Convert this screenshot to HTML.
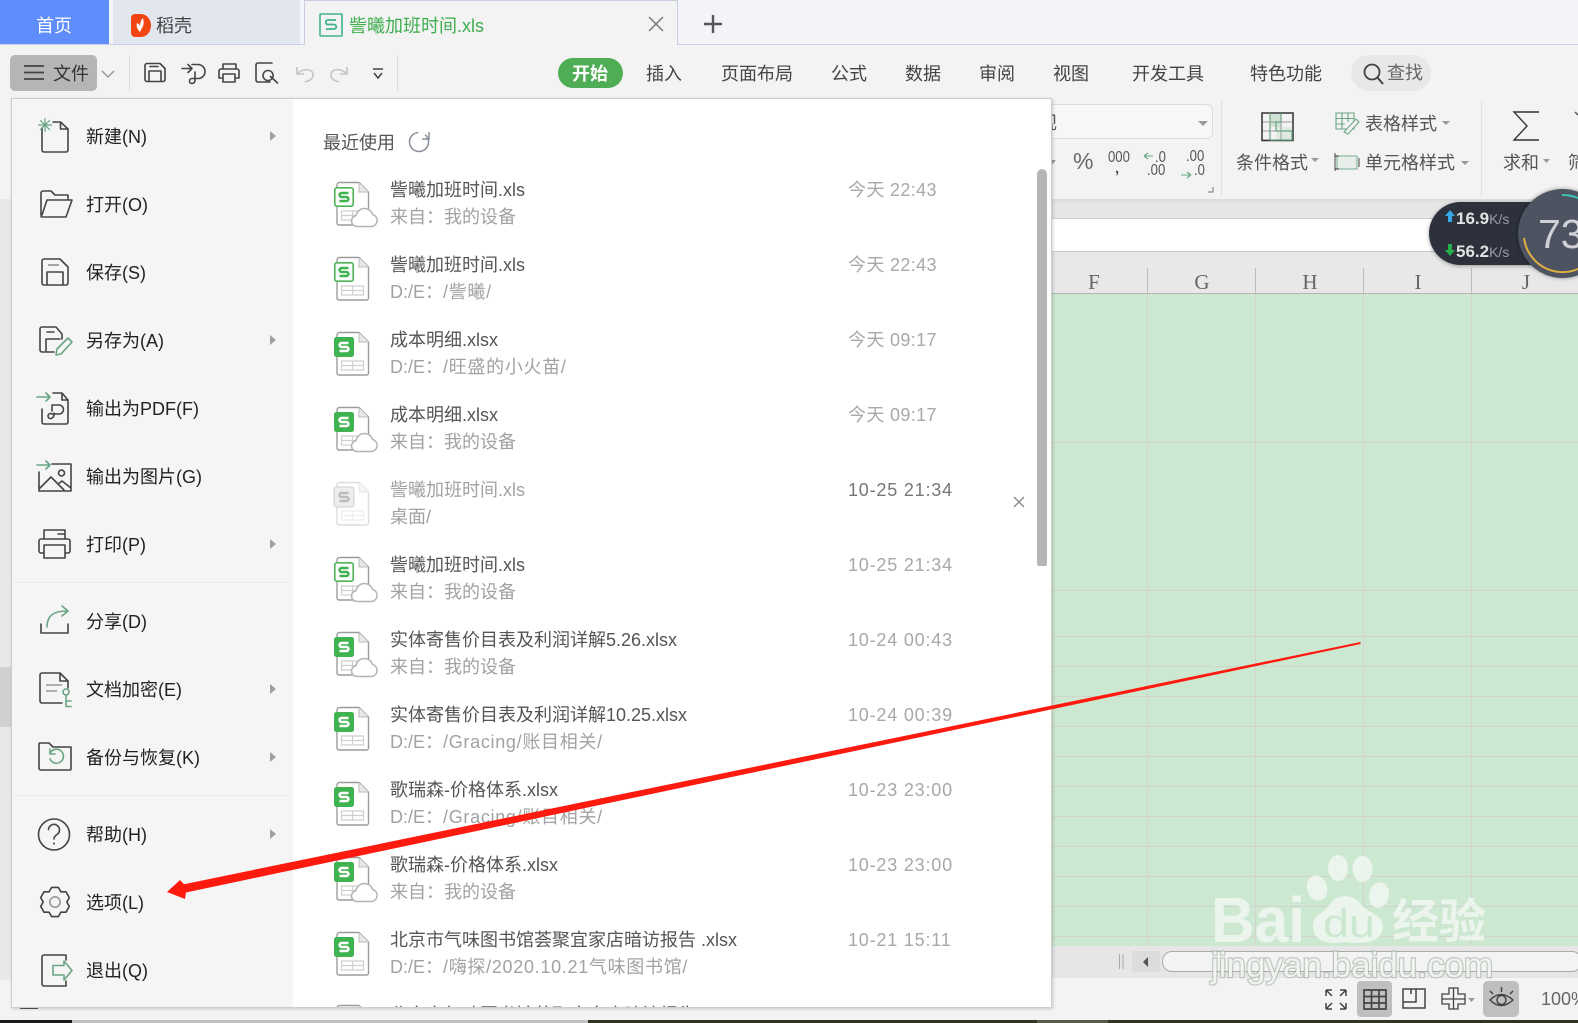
<!DOCTYPE html>
<html lang="zh"><head><meta charset="utf-8"><title>WPS</title>
<style>
html,body{margin:0;padding:0;background:#f3f3f3}
body{width:1578px;height:1023px;position:relative;overflow:hidden;font-family:"Liberation Sans","Noto Sans CJK SC",sans-serif;font-size:18px;color:#333}
.a{position:absolute}
.t{position:absolute;white-space:nowrap;line-height:18px;height:18px}
.m{color:#222;left:86px}
.n{color:#555;left:390px}
.s{color:#a2a2a2;left:390px}
.s span{letter-spacing:.7px}
.d{color:#a8a8a8;left:848px;letter-spacing:.8px}
.d.j{letter-spacing:.35px}
.g{position:absolute;background:#d2d2cf}
.tab{color:#444;transform:translateX(-50%)}
.ar{position:absolute;left:270px;width:0;height:0;border-left:6px solid #a0a0a0;border-top:5px solid transparent;border-bottom:5px solid transparent}
svg{position:absolute;left:0;top:0;overflow:visible}
.c{fill:none;stroke:#444;stroke-width:1.6;stroke-linejoin:round;stroke-linecap:round}
.gr{fill:none;stroke:#69a583;stroke-width:1.6;stroke-linejoin:round;stroke-linecap:round}
.col{font-family:"Liberation Serif",serif;font-size:21px;color:#666;line-height:21px;height:21px;transform:translateX(-50%)}
.num{font-size:16px;line-height:16px;height:16px;color:#555;transform:scaleX(.82);transform-origin:left top}
</style></head><body>
<!-- tab bar -->
<div class="a" style="left:0;top:0;width:1578px;height:44px;background:#f2f4f9;border-bottom:1px solid #c9cfe0"></div>
<div class="a" style="left:0;top:0;width:109px;height:44px;background:#5f8dfc"></div>
<div class="a" style="left:113px;top:0;width:187px;height:44px;background:#e2e6ef"></div>
<div class="a" style="left:304px;top:0;width:374px;height:45px;background:#f3f3f3;border:1px solid #c9cfe0;border-bottom:0;box-sizing:border-box"></div>
<div class="t" style="left:36px;top:17px;color:#fff">首页</div>
<div class="t" style="left:156px;top:17px;color:#444">稻壳</div>
<div class="t" style="left:349px;top:17px;color:#3fae4f">訾曦加班时间.xls</div>
<!-- toolbar bg -->
<div class="a" style="left:0;top:45px;width:1578px;height:154px;background:#f3f3f3"></div>
<div class="a" style="left:0;top:199px;width:1578px;height:19px;background:linear-gradient(#dcdcdc,#e6e6e6 5px)"></div>
<div class="a" style="left:0;top:218px;width:1578px;height:34px;background:#fff;border-top:1px solid #d0d0d0;border-bottom:1px solid #c8c8c8;box-sizing:border-box"></div>
<div class="a" style="left:0;top:252px;width:1578px;height:42px;background:#e8e8e8;border-bottom:1px solid #b4b4b4;box-sizing:border-box"></div>
<div class="a" style="left:10px;top:55px;width:87px;height:36px;background:#b5b5b5;border-radius:5px"></div>
<div class="t" style="left:53px;top:65px;color:#333">文件</div>
<div class="a" style="left:129px;top:55px;width:1px;height:36px;background:#dcdcdc"></div>
<div class="a" style="left:397px;top:55px;width:1px;height:36px;background:#dcdcdc"></div>
<div class="a" style="left:558px;top:58px;width:65px;height:30px;background:#4fae55;border-radius:15px"></div>
<div class="t" style="left:572px;top:65px;color:#fff;font-weight:700">开始</div>
<div class="t tab" style="left:664px;top:65px">插入</div>
<div class="t tab" style="left:757px;top:65px">页面布局</div>
<div class="t tab" style="left:849px;top:65px">公式</div>
<div class="t tab" style="left:923px;top:65px">数据</div>
<div class="t tab" style="left:997px;top:65px">审阅</div>
<div class="t tab" style="left:1071px;top:65px">视图</div>
<div class="t tab" style="left:1168px;top:65px">开发工具</div>
<div class="t tab" style="left:1286px;top:65px">特色功能</div>
<div class="a" style="left:1351px;top:55px;width:80px;height:36px;background:#e7e8e9;border-radius:18px"></div>
<div class="t" style="left:1387px;top:64px;color:#666">查找</div>
<!-- ribbon right -->
<div class="a" style="left:1040px;top:104px;width:173px;height:35px;background:#f7f7f7;border:1px solid #dcdcdc;border-radius:6px;box-sizing:border-box"></div>
<div class="t" style="left:1039px;top:114px;color:#555">规</div>
<div class="a" style="left:1221px;top:101px;width:1px;height:95px;background:#e0e0e0"></div>
<div class="a" style="left:1481px;top:101px;width:1px;height:95px;background:#e0e0e0"></div>
<div class="t" style="left:1236px;top:154px;color:#555">条件格式</div>
<div class="t" style="left:1365px;top:115px;color:#555">表格样式</div>
<div class="t" style="left:1365px;top:154px;color:#555">单元格样式</div>
<div class="t" style="left:1503px;top:154px;color:#555">求和</div>
<div class="t" style="left:1568px;top:154px;color:#555">筛</div>
<div class="t" style="left:1073px;top:150px;font-size:23px;line-height:23px;color:#6a6a6a">%</div>
<div class="t num" style="left:1108px;top:150px">000</div>
<div class="t" style="left:1115px;top:161px;font-size:15px;line-height:15px;color:#555;font-weight:700">,</div>
<div class="t num" style="left:1155px;top:150px">.0</div>
<div class="t num" style="left:1147px;top:163px">.00</div>
<div class="t num" style="left:1186px;top:149px">.00</div>
<div class="t num" style="left:1194px;top:163px">.0</div>
<!-- column headers -->
<div class="t col" style="left:1094px;top:272px">F</div>
<div class="t col" style="left:1202px;top:272px">G</div>
<div class="t col" style="left:1310px;top:272px">H</div>
<div class="t col" style="left:1418px;top:272px">I</div>
<div class="t col" style="left:1526px;top:272px">J</div>
<div class="a" style="left:1147px;top:268px;width:1px;height:26px;background:#bcbcbc"></div>
<div class="a" style="left:1255px;top:268px;width:1px;height:26px;background:#bcbcbc"></div>
<div class="a" style="left:1363px;top:268px;width:1px;height:26px;background:#bcbcbc"></div>
<div class="a" style="left:1471px;top:268px;width:1px;height:26px;background:#bcbcbc"></div>
<!-- grid -->
<div class="a" style="left:1040px;top:294px;width:538px;height:652px;background:#cde8d0"></div>
<div class="g" style="left:1147px;top:294px;width:1px;height:652px"></div>
<div class="g" style="left:1255px;top:294px;width:1px;height:652px"></div>
<div class="g" style="left:1363px;top:294px;width:1px;height:652px"></div>
<div class="g" style="left:1471px;top:294px;width:1px;height:652px"></div>
<div class="g" style="left:1040px;top:442px;width:538px;height:1px"></div>
<div class="g" style="left:1040px;top:590px;width:538px;height:1px"></div>
<div class="g" style="left:1040px;top:636px;width:538px;height:1px"></div>
<div class="g" style="left:1040px;top:666px;width:538px;height:1px"></div>
<div class="g" style="left:1040px;top:696px;width:538px;height:1px"></div>
<div class="g" style="left:1040px;top:726px;width:538px;height:1px"></div>
<div class="g" style="left:1040px;top:756px;width:538px;height:1px"></div>
<div class="g" style="left:1040px;top:786px;width:538px;height:1px"></div>
<div class="g" style="left:1040px;top:816px;width:538px;height:1px"></div>
<div class="g" style="left:1040px;top:846px;width:538px;height:1px"></div>
<div class="g" style="left:1040px;top:876px;width:538px;height:1px"></div>
<div class="g" style="left:1040px;top:906px;width:538px;height:1px"></div>
<div class="g" style="left:1040px;top:936px;width:538px;height:1px"></div>
<!-- left strip -->
<div class="a" style="left:0;top:199px;width:11px;height:781px;background:#e8e8e8"></div>
<div class="a" style="left:0;top:667px;width:11px;height:60px;background:#d0d0d0"></div>
<div class="a" style="left:20px;top:1008px;width:18px;height:1px;background:#555"></div>
<!-- bottom bars -->
<div class="a" style="left:1040px;top:946px;width:538px;height:32px;background:#e6e6e6"></div>
<div class="a" style="left:1132px;top:951px;width:28px;height:21px;background:#dcdcdc"></div>
<div class="a" style="left:1162px;top:951px;width:420px;height:21px;background:#f3f3f3;border:1px solid #aaa;border-radius:10px;box-sizing:border-box"></div>
<div class="a" style="left:1357px;top:981px;width:35px;height:36px;background:#bfbfbf;border-radius:4px"></div>
<div class="a" style="left:1483px;top:981px;width:36px;height:36px;background:#bfbfbf;border-radius:5px"></div>
<div class="t" style="left:1541px;top:990px;color:#666">100%</div>
<div class="a" style="left:0;top:1020px;width:1578px;height:3px;background:#33331f"></div>
<div class="a" style="left:0;top:1020px;width:72px;height:3px;background:#1a1a1a"></div>
<div class="a" style="left:72px;top:1020px;width:516px;height:3px;background:#c0c0c0"></div>
<div class="a" style="left:1037px;top:1020px;width:71px;height:3px;background:#5a5a4a"></div>
<!-- icons under the menu -->
<svg width="1578" height="1023" viewBox="0 0 1578 1023">
 <defs>
  <g id="body"><path d="M6 .5H25L34.500 10V41a2 2 0 0 1-2 2H5a2 2 0 0 1-2-2V3a2.500 2.500 0 0 1 3-2.500Z" fill="#fff" stroke="#9c9c9c" stroke-width="1.4"/><path d="M25 .5V10H34.500" fill="#e8e8e8" stroke="#bbb"/><path d="M7.500 29H29.500V38H7.500ZM7.500 33.500H29.500M18.500 29V38" fill="none" stroke="#cfcfcf" stroke-width="1.2"/></g>
  <path id="cl" d="M23 44.500a5.500 5.500 0 0 1-1-10.900a8.500 8.500 0 0 1 16.500-1.200a6.200 6.200 0 0 1-.5 12.100Z" fill="#fff" stroke="#b4b4b4" stroke-width="1.5"/>
  <g id="out"><use href="#body"/><rect x=".8" y="5.800" width="18.400" height="18.400" rx="2" fill="#fff" stroke="#4db557" stroke-width="1.600"/><path d="M14.500 11H7.500a2 2 0 0 0 0 4H12.500a2 2 0 0 1 0 4H5.500" fill="none" stroke="#3fb34f" stroke-width="2.400"/></g>
  <g id="fil"><use href="#body"/><rect y="5" width="20" height="20" rx="2.500" fill="#3fb34f"/><path d="M14.500 11H7.500a2 2 0 0 0 0 4H12.500a2 2 0 0 1 0 4H5.500" fill="none" stroke="#fff" stroke-width="2.400"/></g>
 </defs>
 <!-- tab icons -->
 <path d="M131 18a4 4 0 0 1 4-4h6a10 11.500 0 0 1 0 23h-6a4 4 0 0 1-4-4Z" fill="#f2450f"/>
 <path d="M140 32c-3-3-4-6-3-9 2 1 3 2 3 4 0-4 1-7 3-9 1 4 1 7-1 10Z" fill="#fff"/>
 <rect x="320" y="14" width="22" height="22" rx="1" fill="none" stroke="#3fb38f" stroke-width="1.600"/>
 <path d="M336 20H328a2 2 0 0 0 0 4.500H334a2 2 0 0 1 0 4.500H326" fill="none" stroke="#3fb38f" stroke-width="1.800"/>
 <path d="M649 17L663 31M663 17L649 31" stroke="#777" stroke-width="1.500"/>
 <path d="M713 15V33M704 24H722" stroke="#555" stroke-width="2.400"/>
 <!-- toolbar icons -->
 <path d="M24 66H44M24 72.500H44M24 79H44" stroke="#444" stroke-width="1.800"/>
 <path d="M102 71L108 77L114 71" fill="none" stroke="#9a9a9a" stroke-width="1.500"/>
 <path class="c" d="M147 63.500H160L165 68.500V79.500a2 2 0 0 1-2 2H147a2 2 0 0 1-2-2V65.500a2 2 0 0 1 2-2ZM149 81.500V71H161V81.500M150 66.500H158"/>
 <path class="c" d="M182 68.500H192M188 64.500L192 68.500L188 72.500M192 64.500H198a7 7 0 0 1 0 14H192a2.500 2.500 0 1 0 0 5a3 3 0 0 0 3-3V72"/>
 <path class="c" d="M223 69V64H236V69M219 78V71a2 2 0 0 1 2-2H237a2 2 0 0 1 2 2V78H235M223 78H219M223 74H235V82H223Z"/>
 <path class="c" d="M272 63H258a2 2 0 0 0-2 2V80a2 2 0 0 0 2 2H270M268 70.500a5 5 0 1 0 .1 0M270.500 76.500L277.500 83"/>
 <path d="M297 67V74H304M297 74C301 69 313 67 313 75C313 79 309 81 305 82" fill="none" stroke="#c4c4c4" stroke-width="1.600"/>
 <path d="M347 67V74H340M347 74C343 69 331 67 331 75C331 79 335 81 339 82" fill="none" stroke="#c4c4c4" stroke-width="1.600"/>
 <path d="M373 69H383M374 73L378 78L382 73" fill="none" stroke="#444" stroke-width="1.600"/>
 <!-- search -->
 <circle cx="1372" cy="72" r="7.500" fill="none" stroke="#444" stroke-width="1.800"/><path d="M1377.500 77.500L1383 84" stroke="#444" stroke-width="2"/>
 <!-- ribbon icons -->
 <path d="M1198 121L1208 121L1203 126Z" fill="#999"/>
 <path d="M1049 160L1056 160L1052.500 164Z" fill="#999"/>
 <path d="M1208 192H1213V187" fill="none" stroke="#777"/>
 <path d="M1144 156H1153M1144 156L1148 153M1144 156L1148 159" fill="none" stroke="#69a583" stroke-width="1.100"/>
 <path d="M1181 175H1191M1191 175L1187 172M1191 175L1187 178" fill="none" stroke="#69a583" stroke-width="1.100"/>
 <rect x="1270" y="113" width="11" height="14" fill="#cfe3d5"/><rect x="1276" y="127" width="16" height="13" fill="#dfe9e2"/>
 <path d="M1262 113H1293V140H1262ZM1262 122H1293M1262 131H1293M1270 113V140M1281 113V140" fill="none" stroke="#9a9a9a"/>
 <path d="M1262 113H1293V140.500H1262Z" fill="none" stroke="#333" stroke-width="1.500"/>
 <path d="M1270 113V140H1292V131H1276V122H1281V113" fill="none" stroke="#69a583" stroke-width="1.200"/>
 <path d="M1336 113H1354V129H1336ZM1336 118.500H1354M1336 124H1345M1342 113V129M1348 113V122" fill="none" stroke="#69a583" stroke-width="1.100"/>
 <path d="M1344 132L1356 119L1359 122L1348 134Z" fill="#f3f3f3" stroke="#69a583" stroke-width="1.100"/>
 <rect x="1337" y="156" width="20" height="13" fill="#e8eeea" stroke="#69a583" stroke-width=".9"/>
 <path d="M1335 153V171M1359 158V167M1335 156H1339M1335 169H1339" fill="none" stroke="#333" stroke-width=".9"/>
 <path d="M1539 112H1514L1527 126L1514 140H1539" fill="none" stroke="#333" stroke-width="1.400"/>
 <path d="M1442 121H1450L1446 125ZM1311 158H1319L1315 162ZM1461 161H1469L1465 165ZM1543 159H1550L1546.500 163Z" fill="#999"/>
 <path d="M1575 112L1578 115" stroke="#555" stroke-width="1.500"/>
 <!-- status icons -->
 <g fill="none" stroke="#444" stroke-width="1.500">
  <path d="M1326 990H1332M1326 990V996M1326 990L1332 996M1346 990H1340M1346 990V996M1346 990L1340 996M1326 1009H1332M1326 1009V1003M1326 1009L1332 1003M1346 1009H1340M1346 1009V1003M1346 1009L1340 1003"/>
  <path d="M1364 990H1386V1009H1364ZM1364 996.500H1386M1364 1003H1386M1371.500 990V1009M1379 990V1009" stroke-width="1.700"/>
  <path d="M1403 989H1425V1008H1403ZM1403 1002H1416V989M1411 989V994"/>
  <path d="M1449 988H1458V994H1465V1004H1458V1009H1449V1004H1442V994H1449ZM1453.500 988V1009M1442 999H1465" stroke-width="1.300"/>
  <path d="M1490 1000q11-11 23 0q-12 11-23 0Z"/><circle cx="1501.500" cy="1000" r="4.500"/><path d="M1490 991l3 3M1501.500 987v5M1513 991l-3 3"/>
 </g>
 <path d="M1468 998H1475L1471.500 1002Z" fill="#999"/>
 <path d="M1119.500 954V969M1123 954V969" stroke="#aaa"/><path d="M1148 957V967L1143 962Z" fill="#555"/>
</svg>
<!-- speed widget -->
<div class="a" style="left:1429px;top:202px;width:150px;height:63px;background:#2c313c;border-radius:32px;box-shadow:0 1px 4px rgba(0,0,0,.35)"></div>
<div class="t" style="left:1456px;top:210px;color:#e2e2e2;font-weight:700;font-size:17px;line-height:17px">16.9<span style="font-size:14px;font-weight:400;color:#9a9da5">K/s</span></div>
<div class="t" style="left:1456px;top:243px;color:#e2e2e2;font-weight:700;font-size:17px;line-height:17px">56.2<span style="font-size:14px;font-weight:400;color:#9a9da5">K/s</span></div>
<div class="a" style="left:1518px;top:189px;width:89px;height:89px;border-radius:50%;background:#4e5362;box-shadow:0 0 4px rgba(0,0,0,.4)"></div>
<div class="t" style="left:1538px;top:214px;color:#cfd1d6;font-size:41px;line-height:41px">73</div>
<svg width="1578" height="1023" viewBox="0 0 1578 1023">
 <path d="M1524 238A39 39 0 0 0 1578 269" fill="none" stroke="#e0b040" stroke-width="2"/>
 <path d="M1562 195A39 39 0 0 1 1578 198" fill="none" stroke="#3cc7b5" stroke-width="2"/>
 <path d="M1450 210L1455 216H1452V222H1448V216H1445Z" fill="#35a8e8"/>
 <path d="M1450 256L1455 250H1452V244H1448V250H1445Z" fill="#25b04a"/>
</svg>
<!-- menu -->
<div class="a" style="left:11px;top:98px;width:1041px;height:910px;background:#fff;border:1px solid #cdcdcd;box-sizing:border-box;box-shadow:1px 1px 3px rgba(0,0,0,.18)"></div>
<div class="a" style="left:12px;top:99px;width:281px;height:908px;background:#f5f5f5"></div>
<div class="a" style="left:12px;top:582px;width:278px;height:1px;background:#ececec"></div>
<div class="a" style="left:12px;top:795px;width:278px;height:1px;background:#ececec"></div>
<div class="t m" style="top:128px">新建(N)</div>
<div class="t m" style="top:196px">打开(O)</div>
<div class="t m" style="top:264px">保存(S)</div>
<div class="t m" style="top:332px">另存为(A)</div>
<div class="t m" style="top:400px">输出为PDF(F)</div>
<div class="t m" style="top:468px">输出为图片(G)</div>
<div class="t m" style="top:536px">打印(P)</div>
<div class="t m" style="top:613px">分享(D)</div>
<div class="t m" style="top:681px">文档加密(E)</div>
<div class="t m" style="top:749px">备份与恢复(K)</div>
<div class="t m" style="top:826px">帮助(H)</div>
<div class="t m" style="top:894px">选项(L)</div>
<div class="t m" style="top:962px">退出(Q)</div>
<div class="ar" style="top:131px"></div>
<div class="ar" style="top:335px"></div>
<div class="ar" style="top:539px"></div>
<div class="ar" style="top:684px"></div>
<div class="ar" style="top:752px"></div>
<div class="ar" style="top:829px"></div>
<svg width="1578" height="1023" viewBox="0 0 1578 1023">
 <path class="c" d="M42 128V150a2 2 0 0 0 2 2H66a2 2 0 0 0 2-2V129L60.500 122H53M60.500 122V129H68"/>
 <path class="gr" d="M45 118.500V131.500M38.500 125H51.500M40.500 120.500L49.500 129.500M49.500 120.500L40.500 129.500" style="stroke-width:1.200"/>
 <path class="c" d="M41 215V193a2 2 0 0 1 2-2H51L55 195H68V200M41 216a1 1 0 0 0 1 1H66L72 200H47L42 215"/>
 <path class="c" d="M44 259H60L68 267V283a2 2 0 0 1-2 2H44a2 2 0 0 1-2-2V261a2 2 0 0 1 2-2ZM47 285V272H63V285"/><path d="M48 265H59" stroke="#888" stroke-width="1.500"/>
 <path class="c" d="M62 339V334L56 327H42a2 2 0 0 0-2 2V350a2 2 0 0 0 2 2H54M46 352V339H60M47 332H54"/>
 <path class="gr" d="M56 355L57 349L68 338L72 342L61 354Z"/>
 <path class="c" d="M42 409V422a2 2 0 0 0 2 2H66a2 2 0 0 0 2-2V400L62 393H53M62 393V400H68"/>
 <path class="c" d="M52 411V405H59a4.500 4.500 0 0 1 0 9H52a2.500 2.500 0 1 0 .1 4c2-1 2-3 2-5"/>
 <path class="gr" d="M37 397H50M46 393L50 397L46 401"/>
 <path class="c" d="M52 464H71V491H39V472M39 489L51 477L64 490M58 484L62 481L71 488"/><circle class="c" cx="61.500" cy="473" r="3"/>
 <path class="gr" d="M37 465H50M46 461L50 465L46 469"/>
 <path class="c" d="M44 539V530H65V539M44 553H41a2 2 0 0 1-2-2V541a2 2 0 0 1 2-2H68a2 2 0 0 1 2 2V551a2 2 0 0 1-2 2H65M44 545H65V558H44ZM58 534H64"/>
 <path class="gr" d="M47 627C47 616 53 611 67 611M62 606L68 611L62 616"/>
 <path class="c" d="M41 624V633H68V624"/>
 <path class="c" d="M62 703H42a2 2 0 0 1-2-2V675a2 2 0 0 1 2-2H60L68 681V688M60 673V681H68"/><path d="M46 685H62M46 691H57" stroke="#999" stroke-width="1.400"/>
 <circle class="gr" cx="66" cy="692" r="3"/><path class="gr" d="M66 695V706.500H71M66 701H71"/>
 <path class="c" d="M39 768V744a1 1 0 0 1 1-1H49L53 747H71V769a1 1 0 0 1-1 1H41a2 2 0 0 1-2-2Z"/>
 <path class="gr" d="M50.500 752.500A7 7 0 1 1 50 759M50 749V754H55"/>
 <circle class="c" cx="54" cy="834.500" r="15.500"/><path class="c" d="M48.500 829.500a5.500 5.500 0 1 1 8.500 5c-2 1.300-3 2.300-3 4.500"/><circle cx="54" cy="843.500" r="1" fill="#444"/>
 <g transform="translate(55 902)"><polygon class="c" points="-3.400,-14.600 3.400,-14.600 5.900,-10.200 11,-10.200 14.300,-4.400 11.800,0 14.300,4.400 11,10.200 5.900,10.200 3.400,14.600 -3.400,14.600 -5.900,10.200 -11,10.200 -14.300,4.400 -11.800,0 -14.300,-4.400 -11,-10.200 -5.900,-10.200"/><circle r="5.200" fill="none" stroke="#999" stroke-width="1.600"/></g>
 <path class="c" d="M66 960V955H44a2 2 0 0 0-2 2V984a2 2 0 0 0 2 2H66V981"/>
 <path class="gr" d="M53 965.500H64V961L72 970.500L64 980V975H53Z"/>
 <circle cx="419" cy="142" r="9.500" fill="none" stroke="#8a8f99" stroke-width="1.500" stroke-dasharray="52 8" transform="rotate(-50 419 142)"/><path d="M429 132V139H422" fill="none" stroke="#8a8f99" stroke-width="1.500"/>
</svg>
<!-- recent -->
<div class="t" style="left:323px;top:134px;color:#555">最近使用</div>
<div class="a" id="list" style="left:0;top:0;width:1040px;height:1007px;overflow:hidden">
 <div class="t n" style="top:181px">訾曦加班时间.xls</div><div class="t s" style="top:208px">来自：我的设备</div><div class="t d j" style="top:181px">今天 22:43</div>
 <div class="t n" style="top:256px">訾曦加班时间.xls</div><div class="t s" style="top:283px">D:/E：<span>/訾曦/</span></div><div class="t d j" style="top:256px">今天 22:43</div>
 <div class="t n" style="top:331px">成本明细.xlsx</div><div class="t s" style="top:358px">D:/E：<span>/旺盛的小火苗/</span></div><div class="t d j" style="top:331px">今天 09:17</div>
 <div class="t n" style="top:406px">成本明细.xlsx</div><div class="t s" style="top:433px">来自：我的设备</div><div class="t d j" style="top:406px">今天 09:17</div>
 <div class="t n" style="top:481px;color:#a2a2a2">訾曦加班时间.xls</div><div class="t s" style="top:508px">桌面/</div><div class="t d" style="top:481px;color:#777">10-25 21:34</div>
 <div class="t n" style="top:556px">訾曦加班时间.xls</div><div class="t s" style="top:583px">来自：我的设备</div><div class="t d" style="top:556px">10-25 21:34</div>
 <div class="t n" style="top:631px">实体寄售价目表及利润详解5.26.xlsx</div><div class="t s" style="top:658px">来自：我的设备</div><div class="t d" style="top:631px">10-24 00:43</div>
 <div class="t n" style="top:706px">实体寄售价目表及利润详解10.25.xlsx</div><div class="t s" style="top:733px">D:/E：<span>/Gracing/账目相关/</span></div><div class="t d" style="top:706px">10-24 00:39</div>
 <div class="t n" style="top:781px">歌瑞森-价格体系.xlsx</div><div class="t s" style="top:808px">D:/E：<span>/Gracing/账目相关/</span></div><div class="t d" style="top:781px">10-23 23:00</div>
 <div class="t n" style="top:856px">歌瑞森-价格体系.xlsx</div><div class="t s" style="top:883px">来自：我的设备</div><div class="t d" style="top:856px">10-23 23:00</div>
 <div class="t n" style="top:931px">北京市气味图书馆荟聚宜家店暗访报告 .xlsx</div><div class="t s" style="top:958px">D:/E：<span>/嗨探/2020.10.21气味图书馆/</span></div><div class="t d" style="top:931px">10-21 15:11</div>
 <div class="t n" style="top:1006px">北京市气味图书馆荟聚宜家店暗访报告 .xlsx</div>
 <svg width="1040" height="1007" viewBox="0 0 1040 1007">
  <use href="#out" x="334" y="182"/><use href="#cl" x="334" y="182"/>
  <use href="#out" x="334" y="257"/>
  <use href="#fil" x="334" y="332"/>
  <use href="#fil" x="334" y="407"/><use href="#cl" x="334" y="407"/>
  <g opacity=".35"><use href="#out" x="334" y="482" style="filter:grayscale(1)"/></g>
  <rect x="334" y="487" width="20" height="20" rx="2.500" fill="#ededed" stroke="#cfcfcf"/><path d="M348.500 493H341.500a2 2 0 0 0 0 4H346.500a2 2 0 0 1 0 4H339.500" fill="none" stroke="#bbb" stroke-width="2.400"/>
  <use href="#out" x="334" y="557"/><use href="#cl" x="334" y="557"/>
  <use href="#fil" x="334" y="632"/><use href="#cl" x="334" y="632"/>
  <use href="#fil" x="334" y="707"/>
  <use href="#fil" x="334" y="782"/>
  <use href="#fil" x="334" y="857"/><use href="#cl" x="334" y="857"/>
  <use href="#fil" x="334" y="932"/>
  <use href="#body" x="334" y="1005"/>
 </svg>
</div>
<div class="a" style="left:1037px;top:169px;width:10px;height:397px;background:#b5b5b5;border-radius:5px 5px 2px 2px"></div>
<!-- top overlay: x, arrow, watermark -->
<svg width="1578" height="1023" viewBox="0 0 1578 1023">
 <path d="M1014 497L1024 507M1024 497L1014 507" stroke="#8a8a8a" stroke-width="1.400"/>
 <polygon points="167,892 180,880 184,884.200 1360.500,642 1360.500,644 186,892.500 185,899" fill="#ff1a10"/>
 <g fill="#f0f6f1" opacity=".88">
  <ellipse cx="1338" cy="868" rx="10" ry="13"/><ellipse cx="1362.500" cy="869" rx="10" ry="13"/>
  <ellipse cx="1317" cy="888" rx="10" ry="13" transform="rotate(-18 1317 888)"/><ellipse cx="1379" cy="895" rx="10" ry="13" transform="rotate(12 1379 895)"/>
  <path d="M1313 926c0-12 12-13 18-23c6-9 22-9 29 0c6 10 23 11 23 23c0 19-26 18-37 16c-11 2-33 3-33-16Z"/>
  <text x="1211" y="942" font-family="Liberation Sans" font-weight="700" font-size="64" textLength="94" lengthAdjust="spacingAndGlyphs">Bai</text>
  <text x="1392" y="938" font-family="Noto Sans CJK SC" font-weight="700" font-size="47">经验</text>
 </g>
 <text x="1323" y="937" font-family="Liberation Sans" font-size="40" fill="#cde8d0" textLength="52" lengthAdjust="spacingAndGlyphs">du</text>
 <text x="1211" y="977" font-family="Liberation Sans" font-size="35" fill="none" stroke="#a9b5aa" stroke-opacity=".7" stroke-width="2.400">jingyan.baidu.com</text>
 <text x="1211" y="977" font-family="Liberation Sans" font-size="35" fill="#f4f7f4" fill-opacity=".9">jingyan.baidu.com</text>
</svg>
</body></html>
